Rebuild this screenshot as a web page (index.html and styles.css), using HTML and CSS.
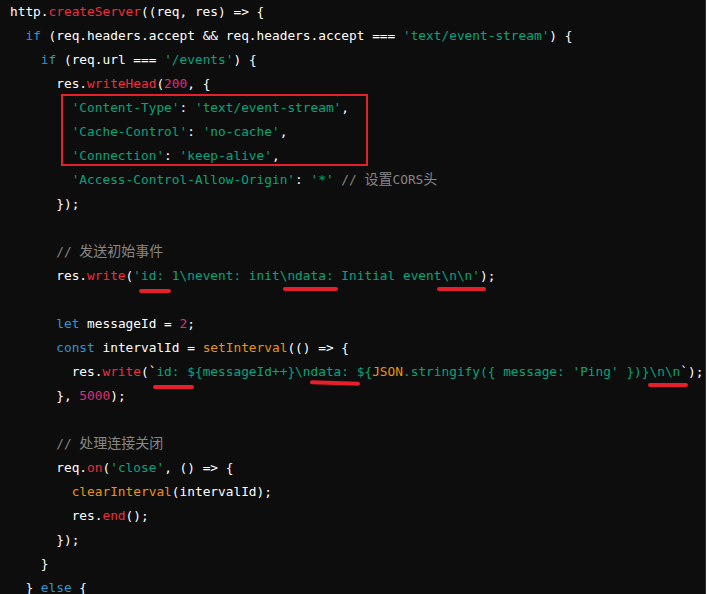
FILE: index.html
```html
<!DOCTYPE html>
<html lang="zh-CN">
<head>
<meta charset="utf-8">
<title>SSE server code</title>
<link rel="stylesheet" href="styles.css">
</head>
<body>
<div class="panel">
<pre class="code"><code>http.<span class="fn">createServer</span>((req, res) =&gt; {
  <span class="kw">if</span> (req.headers.accept &amp;&amp; req.headers.accept === <span class="str">'text/event-stream'</span>) {
    <span class="kw">if</span> (req.url === <span class="str">'/events'</span>) {
      res.<span class="fn">writeHead</span>(<span class="num">200</span>, {
        <span class="str">'Content-Type'</span>: <span class="str">'text/event-stream'</span>,
        <span class="str">'Cache-Control'</span>: <span class="str">'no-cache'</span>,
        <span class="str">'Connection'</span>: <span class="str">'keep-alive'</span>,
        <span class="str">'Access-Control-Allow-Origin'</span>: <span class="str">'*'</span> <span class="cm">// <span class="cjk">设置</span>CORS<span class="cjk">头</span></span>
      });

      <span class="cm">// <span class="cjk">发送初始事件</span></span>
      res.<span class="fn">write</span>(<span class="str">'id: 1\nevent: init\ndata: Initial event\n\n'</span>);

      <span class="kw">let</span> messageId = <span class="num">2</span>;
      <span class="kw">const</span> intervalId = <span class="bi">setInterval</span>(() =&gt; {
        res.<span class="fn">write</span>(`<span class="str">id: ${messageId++}\ndata: ${<span class="bi">JSON</span>.stringify({ message: 'Ping' })}\n\n</span>`);
      }, <span class="num">5000</span>);

      <span class="cm">// <span class="cjk">处理连接关闭</span></span>
      req.<span class="fn">on</span>(<span class="str">'close'</span>, () =&gt; {
        <span class="bi">clearInterval</span>(intervalId);
        res.<span class="fn">end</span>();
      });
    }
  } <span class="kw">else</span> {
</code></pre>
<div class="mark box"></div>
<div class="mark line l1"></div>
<div class="mark line l2"></div>
<div class="mark line l3"></div>
<div class="mark line l4"></div>
<div class="mark line l5"></div>
<div class="mark line l6"></div>
</div>
</body>
</html>
```
FILE: styles.css
```css
html, body {
  margin: 0;
  padding: 0;
  background: #ffffff;
}

.panel {
  position: relative;
  width: 705px;
  height: 594px;
  background: #0d0d0d;
  border-right: 1px solid #2c2c2c;
  overflow: hidden;
}

.code {
  margin: 0;
  padding: 0 0 0 10px;
  font-family: "DejaVu Sans Mono", "Liberation Mono", monospace;
  font-size: 12.8px;
  line-height: 24px;
  color: #ffffff;
  white-space: pre;
}

.code code {
  font-family: inherit;
}

.kw { color: #2e95d3; }
.str { color: #00a67d; }
.fn { color: #f22c3d; }
.num { color: #df3079; }
.bi { color: #e9950c; }
.cm { color: #868686; }

.cjk {
  font-family: "Noto Sans CJK SC", sans-serif;
  font-size: 14px;
  line-height: 1;
}

.mark {
  position: absolute;
}

.box {
  left: 61px;
  top: 94px;
  width: 303px;
  height: 68px;
  border: 2px solid #e5202a;
}

.line {
  height: 4px;
  border-radius: 2px;
  background: #e5202a;
}

.l1 { left: 139px; top: 289px; width: 32px; }
.l2 { left: 283px; top: 287px; width: 55px; }
.l3 { left: 437px; top: 287px; width: 49px; }
.l4 { left: 153px; top: 385px; width: 41px; }
.l5 { left: 310px; top: 381px; width: 50px; transform: rotate(2deg); }
.l6 { left: 648px; top: 383px; width: 40px; }
```
